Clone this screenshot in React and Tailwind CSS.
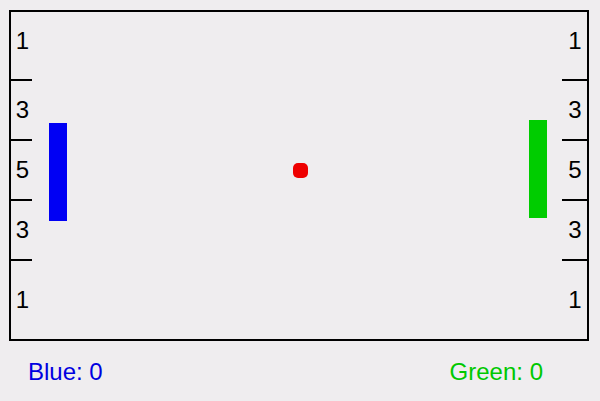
import React from 'react';

const segments = [
  { n: 1, h: 'h-[67px]', extra: 'pb-[9px]' },
  { n: 3, h: 'h-[58px]', extra: '' },
  { n: 5, h: 'h-[58px]', extra: '' },
  { n: 3, h: 'h-[58px]', extra: '' },
  { n: 1, h: 'h-[78px]', extra: '' },
];

function Scale({ width, align }) {
  return (
    <div className={`flex flex-col ${width} h-full`}>
      {segments.map((s, i) => (
        <React.Fragment key={i}>
          {i > 0 && <div className="h-[2px] w-full bg-black" />}
          <div className={`${s.h} ${s.extra} flex items-center justify-center ${align} text-[24px] leading-none text-black`}>
            {s.n}
          </div>
        </React.Fragment>
      ))}
    </div>
  );
}

export default function App() {
  return (
    <div className="w-[600px] h-[401px] bg-[#efedef] pl-[9px] pt-[10px] font-['Liberation_Sans',Arial,sans-serif] overflow-hidden">
      <div className="relative w-[580px] h-[331px] border-2 border-black flex justify-between">
        <Scale width="w-[21px]" align="pl-[2px]" />
        <Scale width="w-[25px]" align="pl-[1px]" />

        {/* paddles and ball */}
        <div className="absolute left-[38px] top-[111px] w-[18px] h-[98px] bg-[#0000f4]" />
        <div className="absolute left-[518px] top-[108px] w-[18px] h-[98px] bg-[#00cc00]" />
        <div className="absolute left-[282px] top-[151px] w-[15px] h-[15px] rounded-[5px] bg-[#ee0000]" />
      </div>
      <div className="mt-[19px] flex justify-between w-[534px] pl-[19px] text-[24px] leading-[24px]">
        <span className="text-[#0000e0]">Blue: 0</span>
        <span className="text-[#00c800]">Green: 0</span>
      </div>
    </div>
  );
}
